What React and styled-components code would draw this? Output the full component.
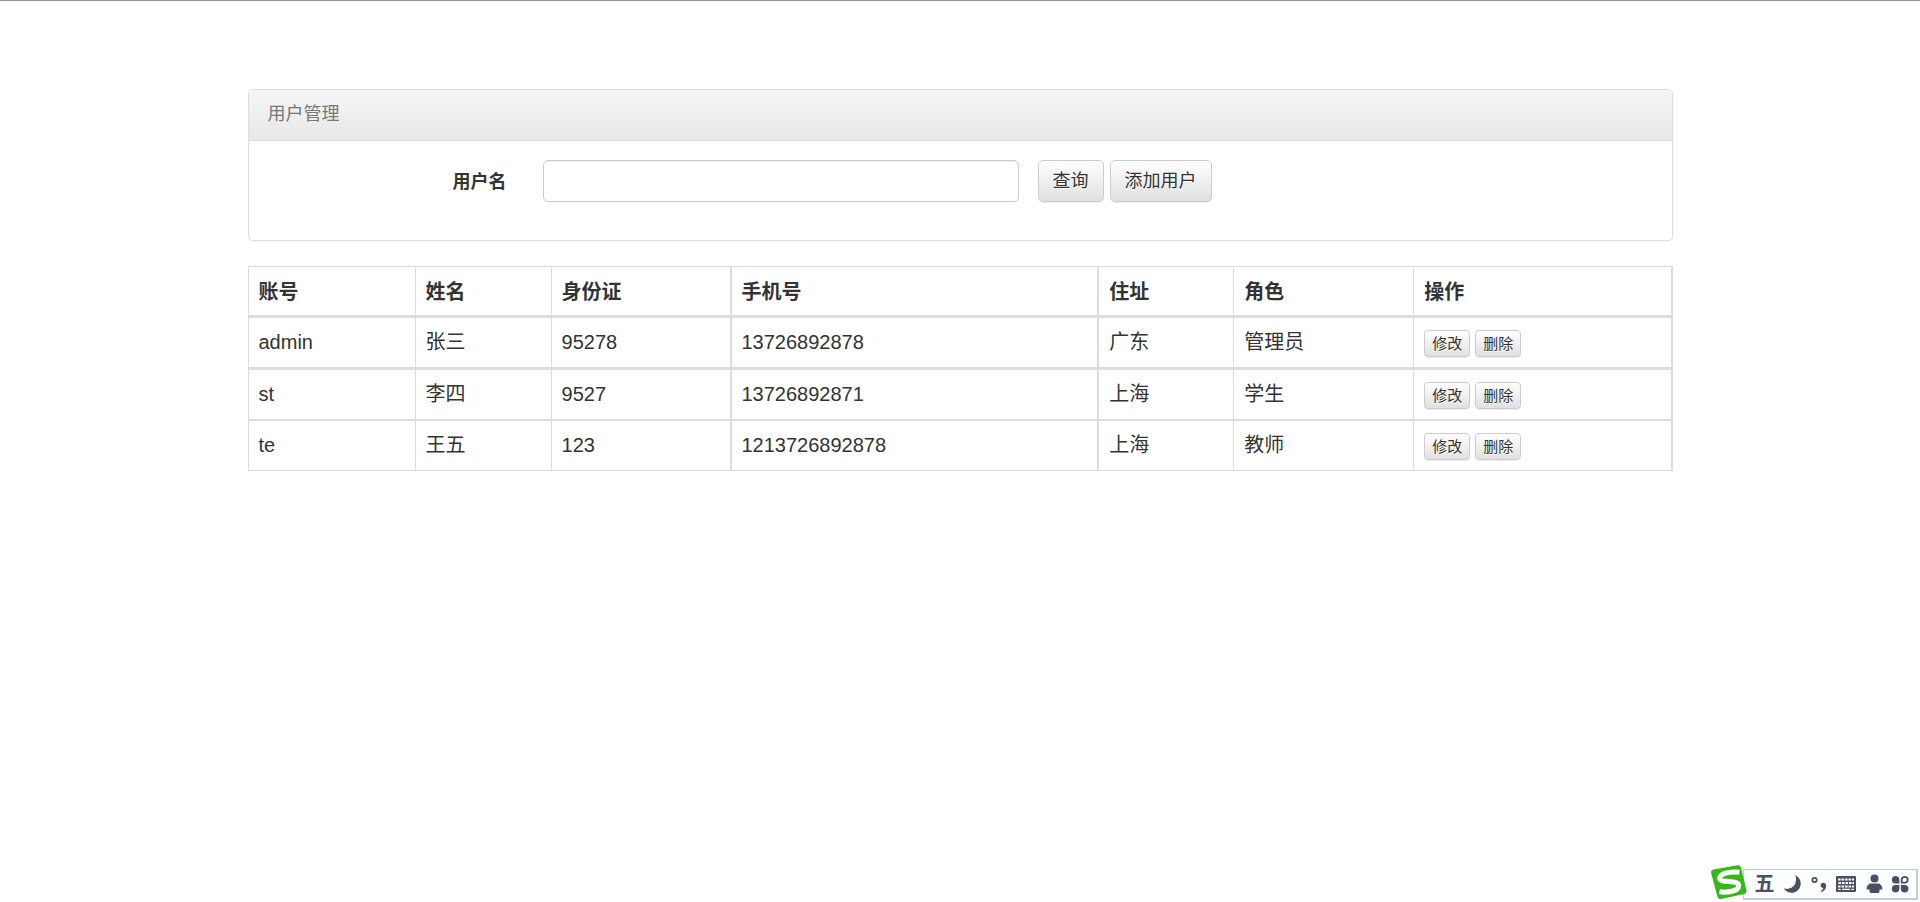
import React, { useState } from 'react';
import styled, { createGlobalStyle } from 'styled-components';

const GlobalStyle = createGlobalStyle`
  * {
    box-sizing: border-box;
  }

  body {
    margin: 0;
    background: #fff;
    color: #333;
    font-family: 'Liberation Sans', 'Noto Sans CJK SC', sans-serif;
    font-size: 18px;
    line-height: 25px;
  }

  button,
  input {
    font-family: inherit;
  }
`;

const Page = styled.div`
  border-top: 1px solid #7f9ba0;
  padding: 88px 16px 0;
`;

const Container = styled.main`
  max-width: 1425px;
  margin: 0 auto;
`;

const Panel = styled.section`
  margin-bottom: 25px;
  background: #fff;
  border: 1px solid #ddd;
  border-radius: 5px;
  box-shadow: 0 1px 2px rgba(0, 0, 0, 0.05);
`;

const PanelHeading = styled.header`
  padding: 12px 19px 13px;
  color: #777;
  background: linear-gradient(to bottom, #f5f5f5 0%, #e8e8e8 100%);
  border-bottom: 1px solid #ddd;
  border-radius: 4px 4px 0 0;
`;

const SearchForm = styled.form`
  display: grid;
  grid-template-columns: minmax(0, 275fr) minmax(0, 514fr) minmax(0, 634fr);
  padding: 19px 0 38px;
`;

const Label = styled.label`
  padding: 10px 17px 0;
  font-weight: bold;
  text-align: right;
`;

const Field = styled.div`
  display: flex;
  gap: 6px;
  padding: 0 19px;

  & + & {
    padding: 0;
  }
`;

const TextInput = styled.input`
  width: 100%;
  height: 42px;
  padding: 7px 15px;
  font-size: 18px;
  color: #555;
  background: #fff;
  border: 1px solid #ccc;
  border-radius: 5px;
  box-shadow: inset 0 1px 1px rgba(0, 0, 0, 0.075);
`;

const Button = styled.button`
  height: ${props => (props.$small ? '27px' : '42px')};
  padding: ${props => (props.$small ? '0 7px' : '0 14px')};
  font-size: ${props => (props.$small ? '15px' : '18px')};
  line-height: ${props => (props.$small ? '22px' : '25px')};
  color: #333;
  white-space: nowrap;
  cursor: pointer;
  text-shadow: 0 1px 0 #fff;
  background: linear-gradient(to bottom, #fff 0%, #e0e0e0 100%);
  border: 1px solid #ccc;
  border-radius: ${props => (props.$small ? '4px' : '5px')};
  box-shadow: inset 0 1px 0 rgba(255, 255, 255, 0.15),
    0 1px 1px rgba(0, 0, 0, 0.075);
`;

const Table = styled.table`
  width: 100%;
  table-layout: fixed;
  border-collapse: separate;
  border-spacing: 0;
  border: solid #ddd;
  border-width: 1px 0 0 1px;
  font-size: 20px;
  line-height: 29px;
`;

const Col = styled.col`
  width: ${props => props.$share}%;
`;

const HeadCell = styled.th`
  padding: 11px 10px 8px;
  text-align: left;
  border: solid #ddd;
  border-width: 0 ${props => props.$line}px 3px 0;
`;

const Cell = styled.td`
  padding: 10px;
  border: solid #ddd;
  border-width: 0 ${props => props.$line}px ${props => props.$rule}px 0;
`;

const Actions = styled.div`
  display: flex;
  gap: 5px;
  padding-top: 2px;
`;

const ImeBar = styled.aside`
  position: fixed;
  right: 2px;
  bottom: 2px;
  display: flex;
  align-items: flex-end;
`;

const ImeLogo = styled.svg`
  width: 38px;
  height: 36px;
  margin-right: -5px;
  z-index: 1;
`;

const ImeTools = styled.div`
  display: flex;
  height: 31px;
  padding: 0 3px 0 7px;
  background: #fdfeff;
  border: 1px solid #bccfdc;
  border-bottom-width: 2px;
  border-right-width: 2px;
`;

const ImeButton = styled.button`
  display: flex;
  align-items: center;
  justify-content: center;
  width: 27px;
  padding: 0;
  color: #4b4f65;
  font-size: 20px;
  font-weight: bold;
  line-height: 20px;
  background: none;
  border: none;

  & > svg {
    width: 22px;
    height: 20px;
    fill: currentColor;
  }
`;

// share: column width in percent, line: right border in px
const columns = [
  { key: 'account', title: '账号', share: 11.73, line: 1 },
  { key: 'name', title: '姓名', share: 9.55, line: 1 },
  { key: 'idCard', title: '身份证', share: 12.64, line: 2 },
  { key: 'phone', title: '手机号', share: 25.82, line: 2 },
  { key: 'address', title: '住址', share: 9.48, line: 1 },
  { key: 'role', title: '角色', share: 12.64, line: 1 },
  { key: 'actions', title: '操作', share: 18.14, line: 2 }
];

const users = [
  {
    account: 'admin',
    name: '张三',
    idCard: '95278',
    phone: '13726892878',
    address: '广东',
    role: '管理员',
    rule: 3
  },
  {
    account: 'st',
    name: '李四',
    idCard: '9527',
    phone: '13726892871',
    address: '上海',
    role: '学生',
    rule: 2
  },
  {
    account: 'te',
    name: '王五',
    idCard: '123',
    phone: '1213726892878',
    address: '上海',
    role: '教师',
    rule: 1
  }
];

const UserRow = ({ user }) => (
  <tr>
    {columns.map(col => (
      <Cell key={col.key} $line={col.line} $rule={user.rule}>
        {col.key === 'actions' ? (
          <Actions>
            <Button type="button" $small>
              修改
            </Button>
            <Button type="button" $small>
              删除
            </Button>
          </Actions>
        ) : (
          user[col.key]
        )}
      </Cell>
    ))}
  </tr>
);

const InputMethod = () => (
  <ImeBar aria-label="输入法">
    <ImeLogo viewBox="0 0 38 36" aria-hidden="true">
      <path
        d="M3.500 5.600 27.500 1.200Q30.400 0.800 31 3.400L36.500 26.600Q37 29.400 34.300 30L11 35Q8.200 35.400 7.500 32.800L1.200 9.400Q0.600 6.200 3.500 5.600Z"
        fill="#35b818"
      />
      <path
        d="M29.500 8.200C22 7.200 9.300 8.800 9.600 14.400C10 19.600 28.700 15.200 28.800 21.600C28.700 27.400 17 28.800 9.500 27.800"
        fill="none"
        stroke="#fff"
        strokeWidth="5"
      />
    </ImeLogo>
    <ImeTools>
      <ImeButton type="button">五</ImeButton>
      <ImeButton type="button" aria-label="半角">
        <svg viewBox="0 0 22 20">
          <path d="M14.200 1C21 4.500 21.300 12.500 16.300 16.800C11.800 20.300 5.500 19 2.800 14.600C7.500 15.600 11.500 14.200 13.600 10.800C15.400 7.600 15.400 4 14.200 1Z" />
        </svg>
      </ImeButton>
      <ImeButton type="button" aria-label="中文标点">
        <svg viewBox="0 0 22 20">
          <circle
            cx="6.500"
            cy="6"
            r="2.200"
            fill="none"
            stroke="currentColor"
            strokeWidth="1.700"
          />
          <path d="M15 8.800C17 8.600 18.300 10 18.200 12C18 15 16 17.400 13.200 18L12.800 16.800C14.300 16.300 15.200 15.300 15.300 14C13.700 14 12.600 13 12.600 11.500C12.600 10 13.600 8.900 15 8.800Z" />
        </svg>
      </ImeButton>
      <ImeButton type="button" aria-label="软键盘">
        <svg viewBox="0 0 22 20">
          <rect x="1" y="2" width="20" height="16" rx="1" />
          <path
            d="M3 5.500H19M3.500 9H19M3 12.500H19"
            fill="none"
            stroke="#fdfeff"
            strokeWidth="2.200"
            strokeDasharray="2.600 0.900"
          />
          <path
            d="M3 15.400H5.600M7 15.400H15M16.400 15.400H19"
            fill="none"
            stroke="#fdfeff"
            strokeWidth="1.400"
          />
        </svg>
      </ImeButton>
      <ImeButton type="button" aria-label="账户">
        <svg viewBox="0 0 22 20">
          <circle cx="12.500" cy="4.600" r="4" />
          <path d="M8 9.500H17C19 10.500 20.600 12.800 20.400 15.500H17.500V17.500Q17 19 16 19H9Q8 19 7.500 17.500V15.500H4.600C4.400 12.800 6 10.500 8 9.500Z" />
        </svg>
      </ImeButton>
      <ImeButton type="button" aria-label="工具箱">
        <svg viewBox="0 0 22 20">
          <path d="M6.500 2C9 2 10.400 3.500 10.400 6V9.500H6.500C4 9.500 2.800 8 2.800 5.800C2.800 3.600 4.300 2 6.500 2Z" />
          <path
            d="M12.700 8.600V5.800C12.700 3.800 14 2.900 15.800 2.900C17.600 2.900 18.700 4 18.700 5.800C18.700 7.600 17.500 8.600 15.800 8.600Z"
            fill="none"
            stroke="currentColor"
            strokeWidth="1.800"
          />
          <path d="M6.500 18.500C9 18.500 10.400 17 10.400 14.500V11H6.500C4 11 2.800 12.500 2.800 14.700C2.800 17 4.300 18.500 6.500 18.500Z" />
          <path d="M15.700 18.500C13.200 18.500 11.800 17 11.800 14.500V11H15.700C18.200 11 19.500 12.500 19.500 14.700C19.500 17 18 18.500 15.700 18.500Z" />
        </svg>
      </ImeButton>
    </ImeTools>
  </ImeBar>
);

const App = () => {
  const [username, setUsername] = useState('');

  return (
    <>
      <GlobalStyle />
      <Page>
        <Container>
          <Panel>
            <PanelHeading>用户管理</PanelHeading>
            <SearchForm onSubmit={e => e.preventDefault()}>
              <Label htmlFor="username">用户名</Label>
              <Field>
                <TextInput
                  id="username"
                  type="text"
                  value={username}
                  onChange={e => setUsername(e.target.value)}
                />
              </Field>
              <Field>
                <Button type="submit">查询</Button>
                <Button type="button">添加用户</Button>
              </Field>
            </SearchForm>
          </Panel>

          <Table>
            <colgroup>
              {columns.map(col => (
                <Col key={col.key} $share={col.share} />
              ))}
            </colgroup>
            <thead>
              <tr>
                {columns.map(col => (
                  <HeadCell key={col.key} $line={col.line} scope="col">
                    {col.title}
                  </HeadCell>
                ))}
              </tr>
            </thead>
            <tbody>
              {users.map(user => (
                <UserRow key={user.account} user={user} />
              ))}
            </tbody>
          </Table>
        </Container>
      </Page>
      <InputMethod />
    </>
  );
};

export default App;
